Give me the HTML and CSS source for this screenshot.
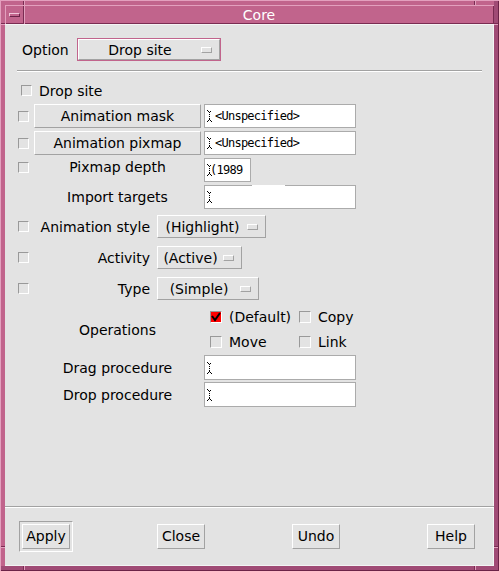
FILE: index.html
```html
<!DOCTYPE html>
<html>
<head>
<meta charset="utf-8">
<link rel="stylesheet" href="styles.css">
</head>
<body>
<div class="window">
  <div class="titlebar">
    <div class="menubtn"><span class="menubar"></span></div>
    <div class="title">Core</div>
  </div>
  <div class="client">
    <div class="option-row">
      <span class="opt-label">Option</span>
      <div class="optmenu focus w-option"><span class="opt-text">Drop site</span><span class="ind"></span></div>
    </div>
    <div class="sep top-sep"></div>

    <div class="drop-row"><span class="cb"></span><span class="drop-text">Drop site</span></div>

    <div class="row first">
      <span class="cb"></span>
      <div class="pbtn">Animation mask</div>
      <div class="field wide"><svg class="ibeam" width="5" height="12" viewBox="0 0 5 12"><g fill="#000"><rect x="0" y="0" width="1" height="1"/><rect x="1" y="1" width="1" height="1"/><rect x="3" y="1" width="1" height="1"/><rect x="2" y="2" width="1" height="1"/><rect x="2" y="4" width="1" height="1"/><rect x="2" y="6" width="1" height="1"/><rect x="2" y="8" width="1" height="1"/><rect x="1" y="10" width="1" height="1"/><rect x="3" y="10" width="1" height="1"/><rect x="0" y="11" width="1" height="1"/><rect x="4" y="11" width="1" height="1"/><rect x="2" y="9" width="1" height="1"/></g></svg><span class="ftext">&lt;Unspecified&gt;</span></div>
    </div>
    <div class="row">
      <span class="cb"></span>
      <div class="pbtn">Animation pixmap</div>
      <div class="field wide"><svg class="ibeam" width="5" height="12" viewBox="0 0 5 12"><g fill="#000"><rect x="0" y="0" width="1" height="1"/><rect x="1" y="1" width="1" height="1"/><rect x="3" y="1" width="1" height="1"/><rect x="2" y="2" width="1" height="1"/><rect x="2" y="4" width="1" height="1"/><rect x="2" y="6" width="1" height="1"/><rect x="2" y="8" width="1" height="1"/><rect x="1" y="10" width="1" height="1"/><rect x="3" y="10" width="1" height="1"/><rect x="0" y="11" width="1" height="1"/><rect x="4" y="11" width="1" height="1"/><rect x="2" y="9" width="1" height="1"/></g></svg><span class="ftext">&lt;Unspecified&gt;</span></div>
    </div>
    <div class="row">
      <span class="cb up"></span>
      <div class="plabel up">Pixmap depth</div>
      <div class="field narrow"><svg class="ibeam tight" width="5" height="12" viewBox="0 0 5 12"><g fill="#000"><rect x="0" y="0" width="1" height="1"/><rect x="1" y="1" width="1" height="1"/><rect x="3" y="1" width="1" height="1"/><rect x="2" y="2" width="1" height="1"/><rect x="2" y="4" width="1" height="1"/><rect x="2" y="6" width="1" height="1"/><rect x="2" y="8" width="1" height="1"/><rect x="1" y="10" width="1" height="1"/><rect x="3" y="10" width="1" height="1"/><rect x="0" y="11" width="1" height="1"/><rect x="4" y="11" width="1" height="1"/><rect x="2" y="9" width="1" height="1"/></g></svg><span class="ftext">(1989</span></div>
    </div>
    <div class="row">
      <span class="cb-slot"></span>
      <div class="plabel">Import targets</div>
      <div class="field wide glitch"><svg class="ibeam" width="5" height="12" viewBox="0 0 5 12"><g fill="#000"><rect x="0" y="0" width="1" height="1"/><rect x="1" y="1" width="1" height="1"/><rect x="3" y="1" width="1" height="1"/><rect x="2" y="2" width="1" height="1"/><rect x="2" y="4" width="1" height="1"/><rect x="2" y="6" width="1" height="1"/><rect x="2" y="8" width="1" height="1"/><rect x="1" y="10" width="1" height="1"/><rect x="3" y="10" width="1" height="1"/><rect x="0" y="11" width="1" height="1"/><rect x="4" y="11" width="1" height="1"/><rect x="2" y="9" width="1" height="1"/></g></svg></div>
    </div>

    <div class="orow style-row">
      <span class="cb"></span>
      <span class="olabel">Animation style</span>
      <div class="optmenu w-high"><span class="opt-text">(Highlight)</span><span class="ind"></span></div>
    </div>
    <div class="orow">
      <span class="cb"></span>
      <span class="olabel">Activity</span>
      <div class="optmenu w-active"><span class="opt-text">(Active)</span><span class="ind"></span></div>
    </div>
    <div class="orow">
      <span class="cb"></span>
      <span class="olabel">Type</span>
      <div class="optmenu w-simple"><span class="opt-text">(Simple)</span><span class="ind"></span></div>
    </div>

    <div class="ops-row">
      <div class="ops-label">Operations</div>
      <div class="ops-grid">
        <div class="tog"><span class="cb big sel"><svg width="10" height="10" viewBox="0 0 10 10"><path d="M1 4 L4 8 L9 1" fill="none" stroke="#000" stroke-width="2"/></svg></span><span>(Default)</span></div>
        <div class="tog"><span class="cb big"></span><span>Copy</span></div>
        <div class="tog"><span class="cb big"></span><span>Move</span></div>
        <div class="tog"><span class="cb big"></span><span>Link</span></div>
      </div>
    </div>

    <div class="prow drag-row">
      <div class="plabel">Drag procedure</div>
      <div class="field wide tall"><svg class="ibeam" width="5" height="12" viewBox="0 0 5 12"><g fill="#000"><rect x="0" y="0" width="1" height="1"/><rect x="1" y="1" width="1" height="1"/><rect x="3" y="1" width="1" height="1"/><rect x="2" y="2" width="1" height="1"/><rect x="2" y="4" width="1" height="1"/><rect x="2" y="6" width="1" height="1"/><rect x="2" y="8" width="1" height="1"/><rect x="1" y="10" width="1" height="1"/><rect x="3" y="10" width="1" height="1"/><rect x="0" y="11" width="1" height="1"/><rect x="4" y="11" width="1" height="1"/><rect x="2" y="9" width="1" height="1"/></g></svg></div>
    </div>
    <div class="prow">
      <div class="plabel">Drop procedure</div>
      <div class="field wide tall"><svg class="ibeam" width="5" height="12" viewBox="0 0 5 12"><g fill="#000"><rect x="0" y="0" width="1" height="1"/><rect x="1" y="1" width="1" height="1"/><rect x="3" y="1" width="1" height="1"/><rect x="2" y="2" width="1" height="1"/><rect x="2" y="4" width="1" height="1"/><rect x="2" y="6" width="1" height="1"/><rect x="2" y="8" width="1" height="1"/><rect x="1" y="10" width="1" height="1"/><rect x="3" y="10" width="1" height="1"/><rect x="0" y="11" width="1" height="1"/><rect x="4" y="11" width="1" height="1"/><rect x="2" y="9" width="1" height="1"/></g></svg></div>
    </div>

    <div class="spacer"></div>
    <div class="sep"></div>
    <div class="buttons">
      <div class="cell"><div class="default-ring"><div class="pb">Apply</div></div></div>
      <div class="cell"><div class="pb">Close</div></div>
      <div class="cell"><div class="pb">Undo</div></div>
      <div class="cell"><div class="pb">Help</div></div>
    </div>
  </div>
</div>
</body>
</html>
```

FILE: styles.css
```css
* { box-sizing: border-box; }
html, body { margin: 0; padding: 0; }
body {
  width: 499px;
  height: 571px;
  overflow: hidden;
  font-family: "DejaVu Sans", "Liberation Sans", sans-serif;
  font-size: 14px;
  color: #000;
  background: #c1648c;
}

.window {
  width: 499px;
  height: 571px;
  padding: 5px;
  display: flex;
  flex-direction: column;
  background:
    linear-gradient(to right, transparent 23px, #7a2c52 23px, #7a2c52 24px, #e3a0be 24px, #e3a0be 25px, transparent 25px),
    linear-gradient(to right, transparent 474px, #7a2c52 474px, #7a2c52 475px, #e3a0be 475px, #e3a0be 476px, transparent 476px),
    linear-gradient(to bottom, transparent 23px, #7a2c52 23px, #7a2c52 24px, #e3a0be 24px, #e3a0be 25px, transparent 25px),
    linear-gradient(to bottom, transparent 546px, #7a2c52 546px, #7a2c52 547px, #e3a0be 547px, #e3a0be 548px, transparent 548px),
    linear-gradient(to left, #a04b75 5px, transparent 5px),
    linear-gradient(to top, #a04b75 5px, transparent 5px),
    #c1648c;
  box-shadow: inset 1px 1px 0 #e3a0be, inset -1px -1px 0 #6b2347;
}

/* title bar */
.titlebar {
  height: 19px;
  display: flex;
  background: #c1648c;
}
.menubtn {
  width: 19px;
  display: flex;
  align-items: center;
  justify-content: center;
  box-shadow: inset 1px 1px 0 #e3a0be, inset -1px -1px 0 #7a2c52;
}
.menubar {
  width: 11px;
  height: 4px;
  border: 1px solid;
  border-color: #f2c6da #6b2347 #6b2347 #f2c6da;
}
.title {
  flex: 1;
  text-align: center;
  color: #fff;
  line-height: 20px;
  box-shadow: inset 1px 1px 0 #e3a0be, inset -1px -1px 0 #7a2c52;
}

/* client area */
.client {
  flex: 1;
  min-width: 0;
  display: flex;
  flex-direction: column;
  background: #e3e3e3;
  box-shadow: inset 0 1px 0 #f4f4f4, inset -1px -1px 0 #f4f4f4;
}

.sep {
  height: 2px;
  border-top: 1px solid #a2a2a2;
  border-bottom: 1px solid #ffffff;
}
.top-sep {
  margin: 9px 12px 0 12px;
}

/* option row */
.option-row {
  margin-top: 14px;
  padding-left: 17px;
  height: 23px;
  display: flex;
  align-items: center;
}
.opt-label {
  width: 55px;
}
.optmenu {
  height: 23px;
  display: flex;
  align-items: center;
  border: 1px solid;
  border-color: #ffffff #a2a2a2 #a2a2a2 #ffffff;
  white-space: nowrap;
}
.optmenu.focus {
  box-shadow: 0 0 0 1px #c1648c;
  height: 21px;
}
.w-option { width: 142px; margin-left: 1px; }
.w-high { width: 109px; }
.w-active { width: 85px; }
.w-simple { width: 102px; }
.opt-text {
  flex: 1;
  text-align: center;
}
.ind {
  width: 11px;
  height: 6px;
  margin-right: 7px;
  border: 1px solid;
  border-color: #ffffff #a2a2a2 #a2a2a2 #ffffff;
}

/* check boxes */
.cb {
  width: 11px;
  height: 11px;
  flex: none;
  border: 1px solid;
  border-color: #999999 #ffffff #ffffff #999999;
  display: inline-flex;
  align-items: center;
  justify-content: center;
}
.cb.big {
  width: 12px;
  height: 12px;
}
.cb.sel {
  background: #ff0000;
}
.cb-slot {
  width: 11px;
  flex: none;
}

.drop-row {
  margin-top: 10px;
  height: 17px;
  padding-left: 16px;
  display: flex;
  align-items: center;
}
.drop-text {
  margin-left: 7px;
}

/* field rows */
.row {
  margin-top: 3px;
  height: 24px;
  padding-left: 13px;
  display: flex;
  align-items: center;
}
.row.first {
  margin-top: 5px;
}
.row .cb, .row .cb-slot {
  margin-right: 5px;
}
.pbtn {
  width: 167px;
  height: 24px;
  line-height: 22px;
  text-align: center;
  border: 1px solid;
  border-color: #ffffff #a2a2a2 #a2a2a2 #ffffff;
  white-space: nowrap;
}
.plabel {
  width: 167px;
  text-align: center;
  white-space: nowrap;
}
.up {
  margin-bottom: 6px;
}
.field {
  position: relative;
  margin-left: 3px;
  height: 24px;
  background: #ffffff;
  border: 1px solid #ababab;
  display: flex;
  align-items: center;
  padding-left: 2px;
  font-family: "DejaVu Sans Mono", "Liberation Mono", monospace;
  font-size: 12px;
  letter-spacing: -0.75px;
  white-space: nowrap;
  overflow: hidden;
}
.field.wide { width: 152px; }
.field.narrow { width: 47px; }
.field.tall { height: 25px; }
.ibeam {
  flex: none;
  margin-right: 3px;
}
.ibeam.tight {
  margin-right: -2px;
}
.glitch {
  overflow: visible;
}
.glitch::before {
  content: "";
  position: absolute;
  top: -1px;
  left: 47px;
  width: 33px;
  height: 2px;
  background: #ffffff;
}

/* option menu rows */
.orow {
  margin-top: 8px;
  height: 23px;
  padding-left: 13px;
  display: flex;
  align-items: center;
}
.orow.style-row {
  margin-top: 6px;
}
.olabel {
  width: 121px;
  margin-right: 7px;
  text-align: right;
  white-space: nowrap;
}

/* operations */
.ops-row {
  margin-top: 4px;
  padding-left: 29px;
  display: flex;
  align-items: center;
}
.ops-label {
  width: 167px;
  text-align: center;
  padding-top: 1px;
}
.ops-grid {
  margin-left: 9px;
  display: grid;
  grid-template-columns: 89px auto;
  grid-auto-rows: 25px;
}
.tog {
  display: flex;
  align-items: center;
  white-space: nowrap;
}
.tog .cb {
  margin-right: 7px;
}

.prow {
  margin-top: 2px;
  padding-left: 29px;
  height: 25px;
  display: flex;
  align-items: center;
}
.drag-row {
  margin-top: 1px;
}

.spacer { flex: 1; }

/* bottom buttons */
.buttons {
  margin-top: 13px;
  margin-bottom: 14px;
  height: 31px;
  padding-left: 17px;
  display: grid;
  grid-template-columns: 135px 135px 135px 1fr;
  align-items: center;
}
.cell {
  display: flex;
  align-items: center;
}
.default-ring {
  margin-left: -3px;
  padding: 2px;
  border: 1px solid;
  border-color: #a2a2a2 #ffffff #ffffff #a2a2a2;
}
.pb {
  width: 48px;
  height: 25px;
  line-height: 23px;
  text-align: center;
  border: 1px solid;
  border-color: #ffffff #a2a2a2 #a2a2a2 #ffffff;
}
```
